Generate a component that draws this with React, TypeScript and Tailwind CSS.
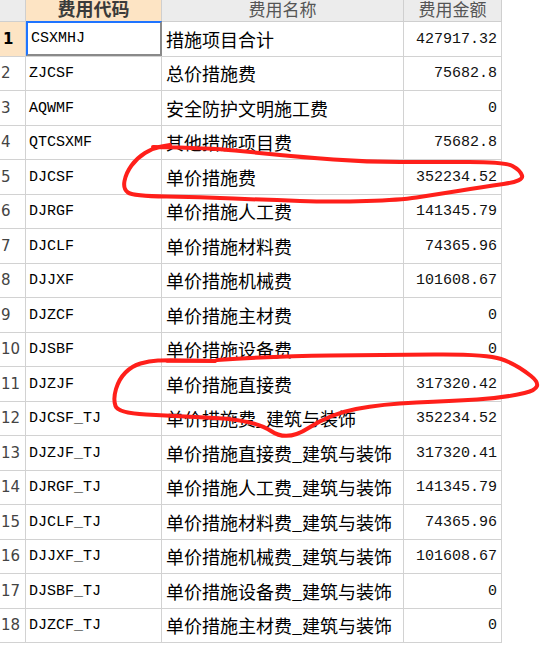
import React from "react";

type Row = { code: string; name: string; amount: string };

const rows: Row[] = [
  { code: "CSXMHJ", name: "措施项目合计", amount: "427917.32" },
  { code: "ZJCSF", name: "总价措施费", amount: "75682.8" },
  { code: "AQWMF", name: "安全防护文明施工费", amount: "0" },
  { code: "QTCSXMF", name: "其他措施项目费", amount: "75682.8" },
  { code: "DJCSF", name: "单价措施费", amount: "352234.52" },
  { code: "DJRGF", name: "单价措施人工费", amount: "141345.79" },
  { code: "DJCLF", name: "单价措施材料费", amount: "74365.96" },
  { code: "DJJXF", name: "单价措施机械费", amount: "101608.67" },
  { code: "DJZCF", name: "单价措施主材费", amount: "0" },
  { code: "DJSBF", name: "单价措施设备费", amount: "0" },
  { code: "DJZJF", name: "单价措施直接费", amount: "317320.42" },
  { code: "DJCSF_TJ", name: "单价措施费_建筑与装饰", amount: "352234.52" },
  { code: "DJZJF_TJ", name: "单价措施直接费_建筑与装饰", amount: "317320.41" },
  { code: "DJRGF_TJ", name: "单价措施人工费_建筑与装饰", amount: "141345.79" },
  { code: "DJCLF_TJ", name: "单价措施材料费_建筑与装饰", amount: "74365.96" },
  { code: "DJJXF_TJ", name: "单价措施机械费_建筑与装饰", amount: "101608.67" },
  { code: "DJSBF_TJ", name: "单价措施设备费_建筑与装饰", amount: "0" },
  { code: "DJZCF_TJ", name: "单价措施主材费_建筑与装饰", amount: "0" },
];

// freehand marker loops, points in page pixels
const loopA: [number, number][] = [
  [153, 147], [210, 148], [260, 153], [300, 157], [367, 162], [433, 162], [505, 162],
  [520, 170], [524, 181], [483, 187], [433, 195], [400, 200], [333, 202], [267, 200],
  [200, 197], [133, 196], [123, 189], [126, 173], [137, 158], [153, 148], [170, 145],
];

const loopB: [number, number][] = [
  [217, 360], [278, 356], [382, 355], [486, 354], [516, 364], [546, 388], [503, 398],
  [451, 401], [382, 404], [330, 414], [287, 442], [255, 420], [174, 416], [118, 413],
  [113, 399], [119, 379], [132, 366], [149, 361], [167, 360], [215, 361],
];

const smooth = (pts: [number, number][]) => {
  let d = `M${pts[0][0]} ${pts[0][1]}`;
  for (let i = 1; i < pts.length - 1; i++) {
    const [x, y] = pts[i];
    const [nx, ny] = pts[i + 1];
    d += ` Q${x} ${y} ${(x + nx) / 2} ${(y + ny) / 2}`;
  }
  const last = pts[pts.length - 1];
  d += ` L${last[0]} ${last[1]}`;
  return d;
};

export default function App() {
  return (
    <div className="relative w-[546px] h-[645px] bg-white overflow-hidden">
      <div className="w-[502px]">
        {/* header */}
        <div className="flex h-[22px] bg-[#ececec] border-b border-[#cfcfcf] overflow-hidden font-['Noto_Sans_CJK_SC',sans-serif]">
          <div className="w-[26px] border-r border-[#cfcfcf]" />
          <div className="w-[136px] bg-[#fde4c4] border-r border-[#cfcfcf] flex justify-center items-end text-[18px] font-bold text-[#3a3a3a] leading-none pb-[4px]">
            费用代码
          </div>
          <div className="w-[242px] border-r border-[#cfcfcf] flex justify-center items-end text-[17px] text-[#555] leading-none pb-[4px]">
            费用名称
          </div>
          <div className="w-[98px] border-r border-[#cfcfcf] flex justify-center items-end text-[17px] text-[#555] leading-none pb-[4px]">
            费用金额
          </div>
        </div>

        {rows.map((r, i) => {
          const first = i === 0;
          return (
            <div
              key={i}
              className={`flex border-b border-[#d2d2d2] ${i % 2 === 0 ? "h-[35px]" : "h-[34px]"}`}
            >
              <div
                className={`w-[26px] border-r border-[#d2d2d2] flex items-center text-[15px] font-['DejaVu_Sans',sans-serif] ${
                  first ? "bg-[#fde4c4] font-bold text-black pl-[3px]" : "text-[#444] pl-[1px]"
                }`}
              >
                {i + 1}
              </div>
              <div
                className={`w-[136px] flex items-center pl-[3px] pt-[2px] text-[15px] text-black font-['Liberation_Mono',monospace] ${
                  first
                    ? "border-t-2 border-l-2 border-t-[#1f74ff] border-l-[#1f74ff] border-r-2 border-b-2 border-r-[#8a8a8a] border-b-[#8a8a8a] -mt-[1px]"
                    : "border-r border-[#d2d2d2]"
                }`}
              >
                {r.code}
              </div>
              <div className="w-[242px] border-r border-[#d2d2d2] flex items-center pl-[4px] text-[18px] text-black whitespace-nowrap overflow-hidden font-['Noto_Sans_CJK_SC',sans-serif]">
                {r.name}
              </div>
              <div className="w-[98px] border-r border-[#d2d2d2] flex items-center justify-end pr-[4px] pt-[2px] text-[15px] text-[#111] font-['Liberation_Mono',monospace]">
                {r.amount}
              </div>
            </div>
          );
        })}
      </div>

      {/* red marker annotations */}
      <svg className="absolute inset-0 pointer-events-none" width="546" height="645" viewBox="0 0 546 645">
        <path d={smooth(loopA)} fill="none" stroke="#ff1f1a" strokeWidth="4" strokeLinecap="round" strokeLinejoin="round" />
        <path d={smooth(loopB)} fill="none" stroke="#ff1f1a" strokeWidth="4" strokeLinecap="round" strokeLinejoin="round" />
        <path d="M167 361 L215 361" fill="none" stroke="#ff1f1a" strokeWidth="3.5" strokeLinecap="round" />
      </svg>
    </div>
  );
}
